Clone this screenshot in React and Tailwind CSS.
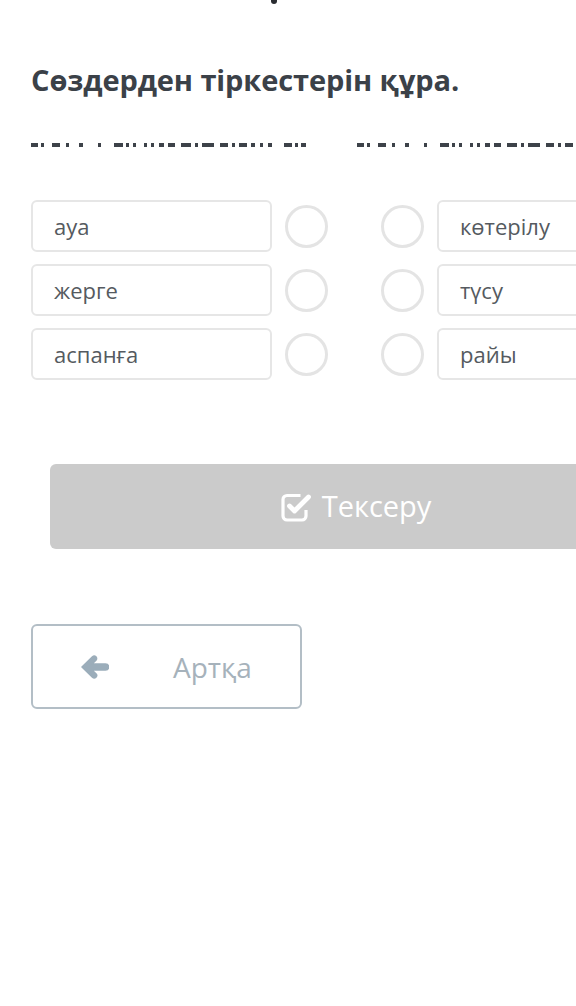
const LEFT = ["ауа", "жерге", "аспанға"];
const RIGHT = ["көтерілу", "түсу", "райы"];

// redacted line: [width, gap] pairs
const DASHES = [
  [5, 2], [2, 6], [6, 5], [2, 8], [3, 12], [2, 10], [7, 2], [2, 3], [2, 6], [2, 3], [2, 4], [4, 3], [5, 5],
  [8, 3], [2, 3], [9, 5], [6, 3], [2, 3], [6, 3], [3, 4], [2, 4], [3, 9], [6, 2], [2, 2], [4, 0],
];

function Dashes({ items }) {
  return (
    <div className="flex items-center shrink-0">
      {items.map(([w, g], i) => (
        <span
          key={i}
          className="block h-[4px] bg-[#3d4249]"
          style={{ width: Math.round(w * 1.3), marginRight: Math.max(3, Math.round(g * 1.28)) }}
        />
      ))}
    </div>
  );
}

function Circle() {
  return <div className="w-[43px] h-[43px] rounded-full border-[3px] border-[#e4e4e4] shrink-0" />;
}

function Box({ text }) {
  return (
    <div className="w-[241px] h-[52px] shrink-0 rounded-md border-2 border-[#e6e6e6] flex items-center pl-[21px] text-[22px] text-[#555a60]">
      {text}
    </div>
  );
}

export default function App() {
  return (
    <div
      className="w-[576px] h-[1006px] overflow-hidden bg-white relative"
      style={{ fontFamily: '"Open Sans", "Noto Sans", sans-serif' }}
    >
      <span className="absolute left-[271px] top-0 w-[6px] h-[4px] rounded-b bg-[#2a2d31]" />
      <div className="w-[720px] pl-[31px] pt-[60px]">
        <h1 className="text-[29px] font-bold text-[#3b4148] leading-[40px] tracking-[-0.1px]">
          Сөздерден тіркестерін құра.
        </h1>

        <div className="mt-[42px] flex items-center gap-[48px] h-[6px]">
          <Dashes items={DASHES} />
          <Dashes items={DASHES} />
        </div>

        <div className="mt-[52px] flex flex-col gap-[12px]">
          {LEFT.map((l, i) => (
            <div key={l} className="flex items-center">
              <Box text={l} />
              <div className="ml-[13px]">
                <Circle />
              </div>
              <div className="ml-[53px]">
                <Circle />
              </div>
              <div className="ml-[13px]">
                <Box text={RIGHT[i]} />
              </div>
            </div>
          ))}
        </div>

        <div className="mt-[84px] ml-[19px] w-[612px] h-[85px] rounded-md bg-[#cbcbcb] flex items-center justify-center gap-[10px] text-white">
          <svg width="31" height="30" viewBox="0 0 31 30" fill="none">
            <path d="M19.5 3.5 H6 a4 4 0 0 0 -4 4 V24 a4 4 0 0 0 4 4 H21 a4 4 0 0 0 4 -4 V18" stroke="white" strokeWidth="3.2" />
            <path d="M8.5 14 L13.5 19 L27.5 5" stroke="white" strokeWidth="4.8" strokeLinecap="round" strokeLinejoin="round" />
          </svg>
          <span className="text-[29px] leading-none pb-[2px]">Тексеру</span>
        </div>

        <div className="mt-[75px] w-[271px] h-[85px] rounded-md border-2 border-[#b3bec6] flex items-center pl-[47px]">
          <svg width="29" height="26" viewBox="0 0 29 26">
            <path
              d="M2 13 L12.5 2.8 a2.4 2.4 0 0 1 3.4 3.4 L12 10 H25.5 a3 3 0 0 1 0 6 H12 L15.9 19.8 a2.4 2.4 0 0 1 -3.4 3.4 Z"
              fill="#9badba"
              stroke="#9badba"
              strokeWidth="1.5"
              strokeLinejoin="round"
            />
          </svg>
          <span className="ml-[64px] text-[28px] text-[#a6b2bb]">Артқа</span>
        </div>
      </div>
    </div>
  );
}
